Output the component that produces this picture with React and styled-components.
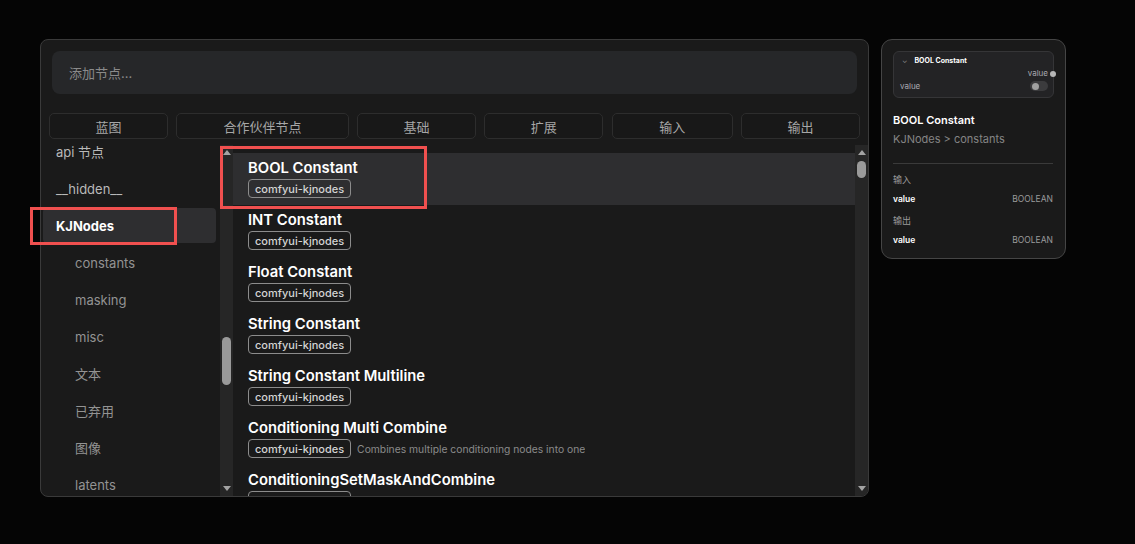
import React, { useLayoutEffect, useRef } from "react";
import styled, { createGlobalStyle } from "styled-components";

const Global = createGlobalStyle`
  html, body { margin: 0; padding: 0; background: #050505; }
  body { font-family: Inter, "Noto Sans CJK SC", sans-serif; -webkit-font-smoothing: antialiased; }
  * { box-sizing: border-box; }
`;

const Page = styled.div`
  position: relative;
  width: 1135px;
  height: 544px;
  display: flex;
  align-items: flex-start;
  gap: 12px;
  padding: 39px 0 0 40px;
  background: #050505;
`;

const Panel = styled.div`
  width: 829px;
  height: 458px;
  background: #1a1a1a;
  border: 1px solid #3a3a3a;
  border-radius: 8px;
  overflow: hidden;
  display: flex;
  flex-direction: column;
`;

const SearchBox = styled.div`
  margin: 11px 11px 0 11px;
  height: 43px;
  background: #262729;
  border-radius: 8px;
  display: flex;
  align-items: center;
  padding-left: 17px;
  color: #8a8a8a;
  font-size: 13px;
`;

const Tabs = styled.div`
  margin: 19px 8px 0 8px;
  display: grid;
  grid-template-columns: 1fr 1.45fr 1fr 1fr 1.02fr 1fr;
  gap: 8.5px;
`;

const Tab = styled.div`
  height: 26px;
  border: 1px solid #2d2d2d;
  border-radius: 5px;
  background: #181818;
  color: #a6a6a6;
  font-size: 13px;
  display: flex;
  align-items: center;
  justify-content: center;
`;

const Body = styled.div`
  margin-top: 6px;
  flex: 1;
  min-height: 0;
  display: flex;
`;

const Sidebar = styled.div`
  width: 179px;
  overflow: hidden;
  padding: 0 4px 0 2px;
`;

const CatList = styled.div`
  display: flex;
  flex-direction: column;
  gap: 2px;
`;

const Cat = styled.div`
  height: 35px;
  flex-shrink: 0;
  display: flex;
  align-items: center;
  padding-left: ${(p) => (p.$sub ? 32 : 13)}px;
  border-radius: 4px;
  font-size: 13px;
  background: ${(p) => (p.$active ? "#2e2e30" : "transparent")};
  color: ${(p) => (p.$active ? "#ffffff" : p.$sub ? "#939393" : "#b9b9b9")};
  font-weight: ${(p) => (p.$active ? 700 : 400)};
`;

const ScrollBar = styled.div`
  width: 13px;
  background: #262626;
  display: flex;
  flex-direction: column;
  flex-shrink: 0;
`;

const Arrow = styled.div`
  height: 15px;
  display: flex;
  align-items: center;
  justify-content: center;
  &::after {
    content: "";
    width: 0;
    height: 0;
    border-left: 4px solid transparent;
    border-right: 4px solid transparent;
    ${(p) =>
      p.$down
        ? "border-top: 5px solid #a3a3a3;"
        : "border-bottom: 5px solid #a3a3a3;"}
  }
`;

const Track = styled.div`
  flex: 1;
  display: flex;
  flex-direction: column;
  align-items: center;
`;

const Thumb = styled.div`
  width: 9px;
  margin-top: ${(p) => p.$top}px;
  height: ${(p) => p.$h}px;
  border-radius: 5px;
  background: #9a9a9a;
`;

const NodeList = styled.div`
  flex: 1;
  min-width: 0;
  overflow: hidden;
  padding-top: 8px;
  display: flex;
  flex-direction: column;
`;

const Node = styled.div`
  height: 52px;
  flex-shrink: 0;
  padding: 5px 15px 5px;
  background: ${(p) => (p.$active ? "#2e2e30" : "transparent")};
`;

const NodeTitle = styled.div`
  font-size: 14.8px;
  font-weight: 600;
  line-height: 20px;
  color: #ffffff;
  white-space: nowrap;
`;

const NodeMeta = styled.div`
  margin-top: 1px;
  display: flex;
  align-items: center;
  gap: 6px;
  white-space: nowrap;
  overflow: hidden;
`;

const Badge = styled.span`
  height: 19px;
  padding: 0 6px;
  border: 1px solid #8c8c8c;
  border-radius: 4px;
  font-size: 11px;
  font-weight: 500;
  color: #d4d4d4;
  display: inline-flex;
  align-items: center;
  flex-shrink: 0;
`;

const Desc = styled.span`
  font-size: 10.3px;
  color: #8a8a8a;
  overflow: hidden;
  text-overflow: clip;
`;

const Card = styled.div`
  width: 185px;
  height: 220px;
  background: #1a1a1a;
  border: 1px solid #454545;
  border-radius: 11px;
  padding: 11px 11px 0 11px;
  display: flex;
  flex-direction: column;
`;

const Mini = styled.div`
  position: relative;
  height: 47px;
  background: #232325;
  border: 1px solid #353537;
  border-radius: 6px;
  padding: 3px 5px 0 6px;
  display: flex;
  flex-direction: column;
`;

const MiniHead = styled.div`
  display: flex;
  align-items: center;
  gap: 7px;
  height: 11px;
  padding-left: 2px;
  font-size: 7px;
  font-weight: 700;
  color: #ffffff;
`;

const Chevron = styled.span`
  color: #8a8a8a;
  font-size: 7px;
  font-weight: 400;
  line-height: 1;
`;

const MiniRow = styled.div`
  display: flex;
  align-items: center;
  justify-content: ${(p) => (p.$end ? "flex-end" : "space-between")};
  height: ${(p) => p.$h}px;
  font-size: 8px;
  color: #a9a9b0;
`;

const Dot = styled.span`
  position: absolute;
  right: -3px;
  top: 19px;
  width: 6px;
  height: 6px;
  border-radius: 50%;
  background: #b5b5b5;
`;

const Toggle = styled.span`
  width: 18px;
  height: 10px;
  border-radius: 5px;
  background: #3b3b3d;
  display: flex;
  align-items: center;
  padding-left: 2px;
  &::after {
    content: "";
    width: 7px;
    height: 7px;
    border-radius: 50%;
    background: #a0a0a0;
  }
`;

const CardTitle = styled.div`
  margin-top: 15px;
  font-size: 11px;
  font-weight: 600;
  color: #ffffff;
  line-height: 14px;
`;

const CardPath = styled.div`
  margin-top: 5px;
  font-size: 11px;
  color: #858585;
  line-height: 14px;
`;

const Divider = styled.div`
  margin-top: 17px;
  height: 1px;
  background: #3a3a3a;
  margin-right: 1px;
`;

const SectionLabel = styled.div`
  margin-top: ${(p) => p.$mt}px;
  font-size: 9px;
  color: #9a9a9a;
  line-height: 12px;
`;

const IORow = styled.div`
  margin-top: 7px;
  display: flex;
  justify-content: space-between;
  font-size: 8.5px;
  line-height: 12px;
  padding-right: 1px;
`;

const IOName = styled.span`
  color: #ffffff;
  font-weight: 600;
`;

const IOType = styled.span`
  color: #9a9a9a;
`;

const Highlight = styled.div`
  position: absolute;
  left: ${(p) => p.$x}px;
  top: ${(p) => p.$y}px;
  width: ${(p) => p.$w}px;
  height: ${(p) => p.$h}px;
  border: 3.5px solid #f0504f;
  pointer-events: none;
`;

const tabs = ["蓝图", "合作伙伴节点", "基础", "扩展", "输入", "输出"];

const cats = [
  { label: "api 节点" },
  { label: "__hidden__" },
  { label: "KJNodes", active: true },
  { label: "constants", sub: true },
  { label: "masking", sub: true },
  { label: "misc", sub: true },
  { label: "文本", sub: true },
  { label: "已弃用", sub: true },
  { label: "图像", sub: true },
  { label: "latents", sub: true },
  { label: "mask", sub: true },
];

const nodes = [
  { title: "BOOL Constant", active: true },
  { title: "INT Constant" },
  { title: "Float Constant" },
  { title: "String Constant" },
  { title: "String Constant Multiline" },
  { title: "Conditioning Multi Combine", desc: "Combines multiple conditioning nodes into one" },
  {
    title: "ConditioningSetMaskAndCombine",
    desc: "Bundles multiple conditioning mask and combine nodes into one,functionality is identical to ComfyUI native nodes",
  },
];

function Scroll({ top, h }) {
  return (
    <ScrollBar>
      <Arrow />
      <Track>
        <Thumb $top={top} $h={h} />
      </Track>
      <Arrow $down />
    </ScrollBar>
  );
}

export default function App() {
  const sideRef = useRef(null);
  useLayoutEffect(() => {
    if (sideRef.current) sideRef.current.scrollTop = 11;
  }, []);
  return (
    <Page>
      <Global />
      <Panel>
        <SearchBox>添加节点...</SearchBox>
        <Tabs>
          {tabs.map((t) => (
            <Tab key={t}>{t}</Tab>
          ))}
        </Tabs>
        <Body>
          <Sidebar ref={sideRef}>
            <CatList>
              {cats.map((c) => (
                <Cat key={c.label} $sub={c.sub} $active={c.active}>
                  {c.label}
                </Cat>
              ))}
            </CatList>
          </Sidebar>
          <Scroll top={177} h={48} />
          <NodeList>
            {nodes.map((n) => (
              <Node key={n.title} $active={n.active}>
                <NodeTitle>{n.title}</NodeTitle>
                <NodeMeta>
                  <Badge>comfyui-kjnodes</Badge>
                  {n.desc && <Desc>{n.desc}</Desc>}
                </NodeMeta>
              </Node>
            ))}
          </NodeList>
          <Scroll top={1} h={17} />
        </Body>
      </Panel>
      <Card>
        <Mini>
          <MiniHead>
            <Chevron>⌄</Chevron>
            BOOL Constant
          </MiniHead>
          <MiniRow $end $h={14}>value</MiniRow>
          <MiniRow $h={12}>
            value
            <Toggle />
          </MiniRow>
          <Dot />
        </Mini>
        <CardTitle>BOOL Constant</CardTitle>
        <CardPath>KJNodes &gt; constants</CardPath>
        <Divider />
        <SectionLabel $mt={10}>输入</SectionLabel>
        <IORow>
          <IOName>value</IOName>
          <IOType>BOOLEAN</IOType>
        </IORow>
        <SectionLabel $mt={10}>输出</SectionLabel>
        <IORow>
          <IOName>value</IOName>
          <IOType>BOOLEAN</IOType>
        </IORow>
      </Card>
      <Highlight $x={30} $y={207} $w={147} $h={38} />
      <Highlight $x={220} $y={146} $w={207} $h={63} />
    </Page>
  );
}
